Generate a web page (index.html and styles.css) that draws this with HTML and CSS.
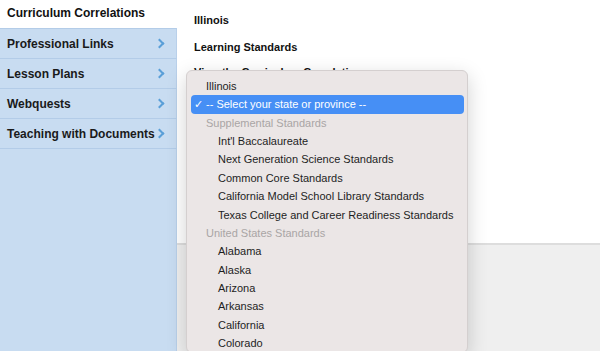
FILE: index.html
```html
<!DOCTYPE html>
<html lang="en">
  <head>
    <meta charset="UTF-8" />
    <meta name="viewport" content="width=device-width, initial-scale=1.0" />
    <title>Curriculum Correlations</title>
    <link rel="stylesheet" href="styles.css">
  </head>
  <body>
    <div class="page">
      <!-- Sidebar navigation -->
      <div class="sidebar">
        <div class="side-title">Curriculum Correlations</div>
        <a href="#" class="side-item">Professional Links <span class="chev"></span></a>
        <a href="#" class="side-item">Lesson Plans <span class="chev"></span></a>
        <a href="#" class="side-item">Webquests <span class="chev"></span></a>
        <a href="#" class="side-item">Teaching with Documents <span class="chev"></span></a>
        <div class="side-fill"></div>
      </div>

      <!-- Main content -->
      <div class="main">
        <div class="heading">Illinois</div>
        <div class="heading">Learning Standards</div>
        <div class="heading note">View the Curriculum Correlations</div>
        <div class="spacer"></div>
        <div class="panel"></div>
      </div>
    </div>

    <!-- Open select menu -->
    <div class="menu">
      <div class="opt">Illinois</div>
      <div class="opt selected"><span class="check">✓</span>-- Select your state or province --</div>
      <div class="opt group">Supplemental Standards</div>
      <div class="opt sub">Int'l Baccalaureate</div>
      <div class="opt sub">Next Generation Science Standards</div>
      <div class="opt sub">Common Core Standards</div>
      <div class="opt sub">California Model School Library Standards</div>
      <div class="opt sub">Texas College and Career Readiness Standards</div>
      <div class="opt group">United States Standards</div>
      <div class="opt sub">Alabama</div>
      <div class="opt sub">Alaska</div>
      <div class="opt sub">Arizona</div>
      <div class="opt sub">Arkansas</div>
      <div class="opt sub">California</div>
      <div class="opt sub">Colorado</div>
    </div>
  </body>
</html>
```

FILE: styles.css
```css
body {
  font-family: "Liberation Sans", Arial, sans-serif;
  margin: 0;
  background-color: #ffffff;
  overflow: hidden;
  height: 351px;
}
.page {
  display: flex;
  height: 351px;
}
.sidebar {
  width: 177px;
  display: flex;
  flex-direction: column;
}
.side-title {
  height: 28px;
  line-height: 26px;
  padding-left: 7px;
  font-size: 12px;
  font-weight: bold;
  color: #111;
}
.side-item {
  display: flex;
  align-items: center;
  justify-content: space-between;
  height: 29px;
  padding: 0 12px 0 7px;
  background-color: #c8dcf1;
  border-top: 1px solid #b3cce8;
  border-right: 1px solid #b9d0ea;
  color: #1a1a1a;
  font-size: 12px;
  font-weight: bold;
  text-decoration: none;
}
.chev {
  width: 5px;
  height: 5px;
  border-top: 2px solid #5a9fd8;
  border-right: 2px solid #5a9fd8;
  transform: rotate(45deg);
  margin-right: 1px;
}
.side-fill {
  flex: 1;
  background-color: #c8dcf1;
  border-top: 1px solid #b3cce8;
  border-right: 1px solid #b9d0ea;
}
.main {
  flex: 1;
  display: flex;
  flex-direction: column;
  padding-top: 7px;
}
.heading {
  line-height: 27px;
  padding-left: 17px;
  font-size: 11px;
  font-weight: bold;
  color: #111;
}
.heading.note {
  margin-top: -2px;
}
.spacer {
  height: 157px;
}
.panel {
  flex: 1;
  background-color: #efefef;
  border-top: 2px solid #dddddd;
}
.menu {
  position: absolute;
  left: 186px;
  top: 70px;
  width: 282px;
  height: 283px;
  padding-top: 6px;
  background-color: #ebe6e6;
  border: 1px solid #d4cfcf;
  border-radius: 6px;
  box-shadow: 0 6px 20px rgba(0, 0, 0, 0.18);
  font-size: 11px;
  color: #1e1e1e;
  box-sizing: border-box;
  overflow: hidden;
}
.opt {
  height: 18.36px;
  line-height: 18.36px;
  padding-left: 19px;
  white-space: nowrap;
}
.opt.selected {
  position: relative;
  margin: 0 3px 0 4px;
  padding-left: 15px;
  background-color: #468ff5;
  border-radius: 4px;
  color: #ffffff;
}
.check {
  position: absolute;
  left: 3px;
}
.opt.group {
  color: #a9a5a5;
}
.opt.sub {
  padding-left: 31px;
}
```
